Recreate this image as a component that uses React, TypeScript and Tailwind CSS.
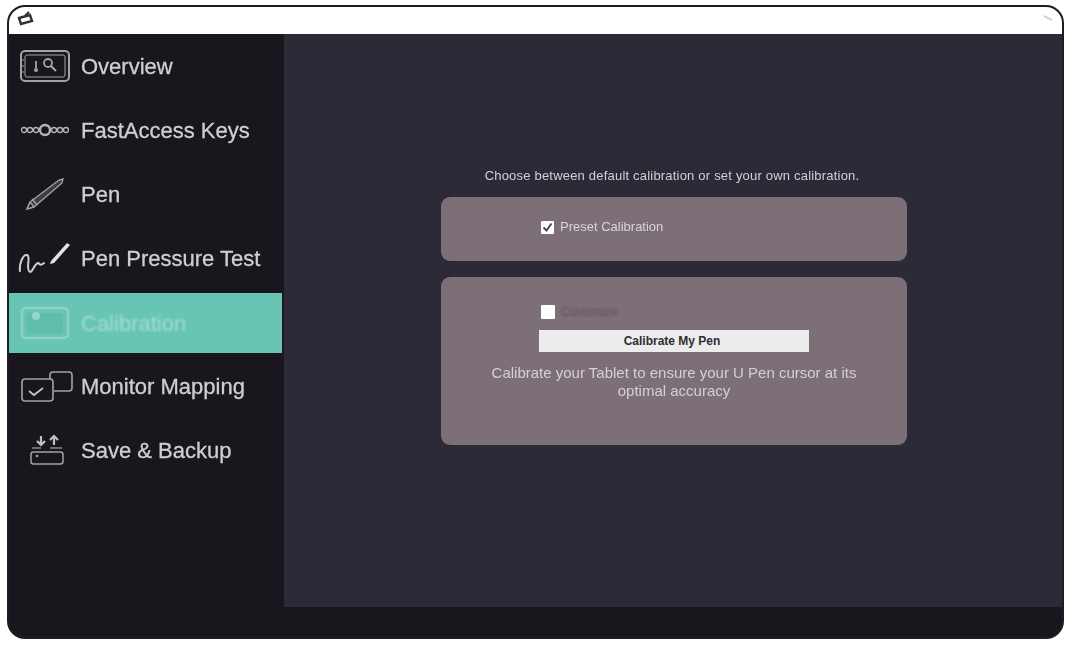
const font = "font-['Liberation_Sans',Arial,sans-serif]";

function OverviewIcon() {
  return (
    <svg width="52" height="34" viewBox="0 0 52 34" fill="none" stroke="#a3a3a6" strokeWidth="2">
      <rect x="2" y="2" width="48" height="30" rx="4" />
      <rect x="6" y="6" width="40" height="22" rx="2" strokeWidth="1" />
      <path d="M2 11h3M2 17h3M2 23h3" strokeWidth="1.2" />
      <path d="M17 12v7" strokeWidth="1.8" />
      <circle cx="17" cy="21" r="2" fill="#a3a3a6" stroke="none" />
      <circle cx="29" cy="14" r="4" strokeWidth="1.8" />
      <path d="M32 17l5 5" strokeWidth="2.2" />
    </svg>
  );
}

function KeysIcon() {
  return (
    <svg width="50" height="14" viewBox="0 0 50 14" fill="none" stroke="#b5b5b8" strokeWidth="1.3">
      <circle cx="4" cy="7" r="2.5" />
      <circle cx="10" cy="7" r="2.5" />
      <circle cx="16" cy="7" r="2.5" />
      <circle cx="25" cy="7" r="5" strokeWidth="2.4" />
      <circle cx="34" cy="7" r="2.5" />
      <circle cx="40" cy="7" r="2.5" />
      <circle cx="46" cy="7" r="2.5" />
    </svg>
  );
}

function PenIcon() {
  return (
    <svg width="44" height="36" viewBox="0 0 44 36" fill="none" stroke="#a3a3a6">
      <path d="M7 26L36 4l4-1-1 4L11 31z" strokeWidth="1.3" fill="#3e3e42" />
      <path d="M9 23l5 6" strokeWidth="1.3" />
      <path d="M7 26l-3 7 7-2" strokeWidth="1.6" />
    </svg>
  );
}

function PressureIcon() {
  return (
    <svg width="56" height="36" viewBox="0 0 56 36" fill="none" stroke="#d0d0d2">
      <path d="M3 31C2 24 6 14 10 15c4 1-1 12 2 16s5-7 9-8c2 0 1 4 6 0" strokeWidth="2" strokeLinecap="round" />
      <path d="M34 21L50 3l3 2-16 18-4 1z" fill="#e2e2e4" stroke="none" />
    </svg>
  );
}

function CalibrationIcon() {
  return (
    <svg width="50" height="34" viewBox="0 0 50 34" fill="none">
      <rect x="2" y="2" width="46" height="30" rx="4" stroke="#8fd3c5" strokeWidth="2.4" />
      <rect x="7" y="7" width="36" height="20" rx="2" fill="#5fbdac" />
      <circle cx="16" cy="10" r="4" fill="#95d6c9" />
    </svg>
  );
}

function MappingIcon() {
  return (
    <svg width="54" height="32" viewBox="0 0 54 32" fill="none" stroke="#a3a3a6" strokeWidth="1.6" className="ml-[3px]">
      <rect x="2" y="9" width="31" height="22" rx="3" />
      <path d="M9 21l5 4 9-7" strokeWidth="1.8" stroke="#c4c4c6" />
      <path d="M30 9V5a3 3 0 013-3h16a3 3 0 013 3v13a3 3 0 01-3 3H34" />
    </svg>
  );
}

function BackupIcon() {
  return (
    <svg width="38" height="34" viewBox="0 0 38 34" fill="none" stroke="#c0c0c3" className="ml-[3px]">
      <path d="M13 3v9M9 8l4 4 4-4" strokeWidth="2.2" />
      <path d="M26 12V3M22 7l4-4 4 4" strokeWidth="2.2" />
      <path d="M4 15h9M22 15h12" strokeWidth="1.2" />
      <rect x="3" y="19" width="32" height="12" rx="2.5" strokeWidth="1.5" stroke="#a3a3a6" />
      <circle cx="9" cy="23" r="1.3" fill="#a3a3a6" stroke="none" />
    </svg>
  );
}

const items = [
  { label: "Overview", icon: <OverviewIcon /> },
  { label: "FastAccess Keys", icon: <KeysIcon /> },
  { label: "Pen", icon: <PenIcon /> },
  { label: "Pen Pressure Test", icon: <PressureIcon /> },
  { label: "Calibration", icon: <CalibrationIcon />, active: true },
  { label: "Monitor Mapping", icon: <MappingIcon /> },
  { label: "Save & Backup", icon: <BackupIcon /> },
];

export default function App() {
  return (
    <div className={`${font} w-[1070px] h-[647px] bg-white pt-[5px] pl-[7px] overflow-hidden`}>
      <div className="w-[1057px] h-[634px] rounded-[18px] overflow-hidden border-2 border-[#1f1d23] bg-[#19171d] flex flex-col blur-[0.7px]">
        {/* Title bar */}
        <div className="h-[27px] shrink-0 bg-white flex items-center justify-between pl-[8px] pr-[8px]">
          <svg width="18" height="16" viewBox="0 0 18 16" fill="none" stroke="#333337" strokeWidth="2.4" className="-mt-[3px]">
            <path d="M2 7l11-3 2 6-11 3z" />
            <path d="M8 5l4-4" />
          </svg>
          <svg width="12" height="8" viewBox="0 0 12 8" fill="none" stroke="#d4d4d4" strokeWidth="2.4" className="-mt-[5px]">
            <path d="M2 2l8 4" />
          </svg>
        </div>

        <div className="flex-1 flex min-h-0">
          {/* Sidebar */}
          <div className="w-[275px] shrink-0 flex flex-col">
            {items.map((item) =>
              item.active ? (
                <div key={item.label} className="h-16 pt-[3px]">
                  <div className="w-[273px] h-[60px] bg-[#68c5b3] flex items-center">
                    <div className="w-[72px] flex justify-center shrink-0">{item.icon}</div>
                    <span className="text-[22px] text-[#a6ddd2] blur-[1px]">{item.label}</span>
                  </div>
                </div>
              ) : (
                <div key={item.label} className="h-16 flex items-center text-[#cfcfd1]">
                  <div className="w-[72px] flex justify-center shrink-0">{item.icon}</div>
                  <span className="text-[22px] [-webkit-text-stroke:0.3px_#cfcfd1]">{item.label}</span>
                </div>
              )
            )}
          </div>

          {/* Main panel */}
          <div className="flex-1 flex flex-col">
            <div className="h-[573px] bg-[#2d2a38] flex flex-col items-center pt-[133px] pl-[2px]">
              <p className="h-[17px] pr-[4px] leading-[17px] text-[13px] text-[#d2d0d4] tracking-[0.2px] blur-[0.4px]">
                Choose between default calibration or set your own calibration.
              </p>
              <div className="mt-[13px] w-[466px] h-[64px] rounded-[9px] bg-[#7c6f77] pl-[100px] pb-[4px] flex items-center">
                <span className="w-[13px] h-[13px] bg-white rounded-[1px] flex items-center justify-center">
                  <svg width="11" height="11" viewBox="0 0 11 11" fill="none" stroke="#4a4a4e" strokeWidth="2">
                    <path d="M1.5 5.5l3 3 5-7" />
                  </svg>
                </span>
                <span className="ml-[6px] text-[13px] text-[#d8d3d6] blur-[0.5px]">Preset Calibration</span>
              </div>
              <div className="mt-[16px] w-[466px] h-[168px] rounded-[9px] bg-[#7c6f77] flex flex-col pt-[27px]">
                <div className="pl-[100px] flex items-center h-[15px]">
                  <span className="w-[14px] h-[14px] bg-white rounded-[1px]" />
                  <span className="ml-[6px] text-[12px] text-[#5f5259] blur-[0.8px]">Customize</span>
                </div>
                <button className="mt-[11px] ml-[98px] w-[270px] h-[22px] bg-[#ececec] text-[12px] font-bold text-[#2e2e30] pr-[4px]">
                  Calibrate My Pen
                </button>
                <p className="mt-[12px] mx-auto w-[385px] text-center text-[15px] leading-[18px] text-[#d5d0d3] blur-[0.5px]">
                  Calibrate your Tablet to ensure your U Pen cursor at its optimal accuracy
                </p>
              </div>
            </div>
            <div className="flex-1 bg-[#19171d]" />
          </div>
        </div>
      </div>
    </div>
  );
}
